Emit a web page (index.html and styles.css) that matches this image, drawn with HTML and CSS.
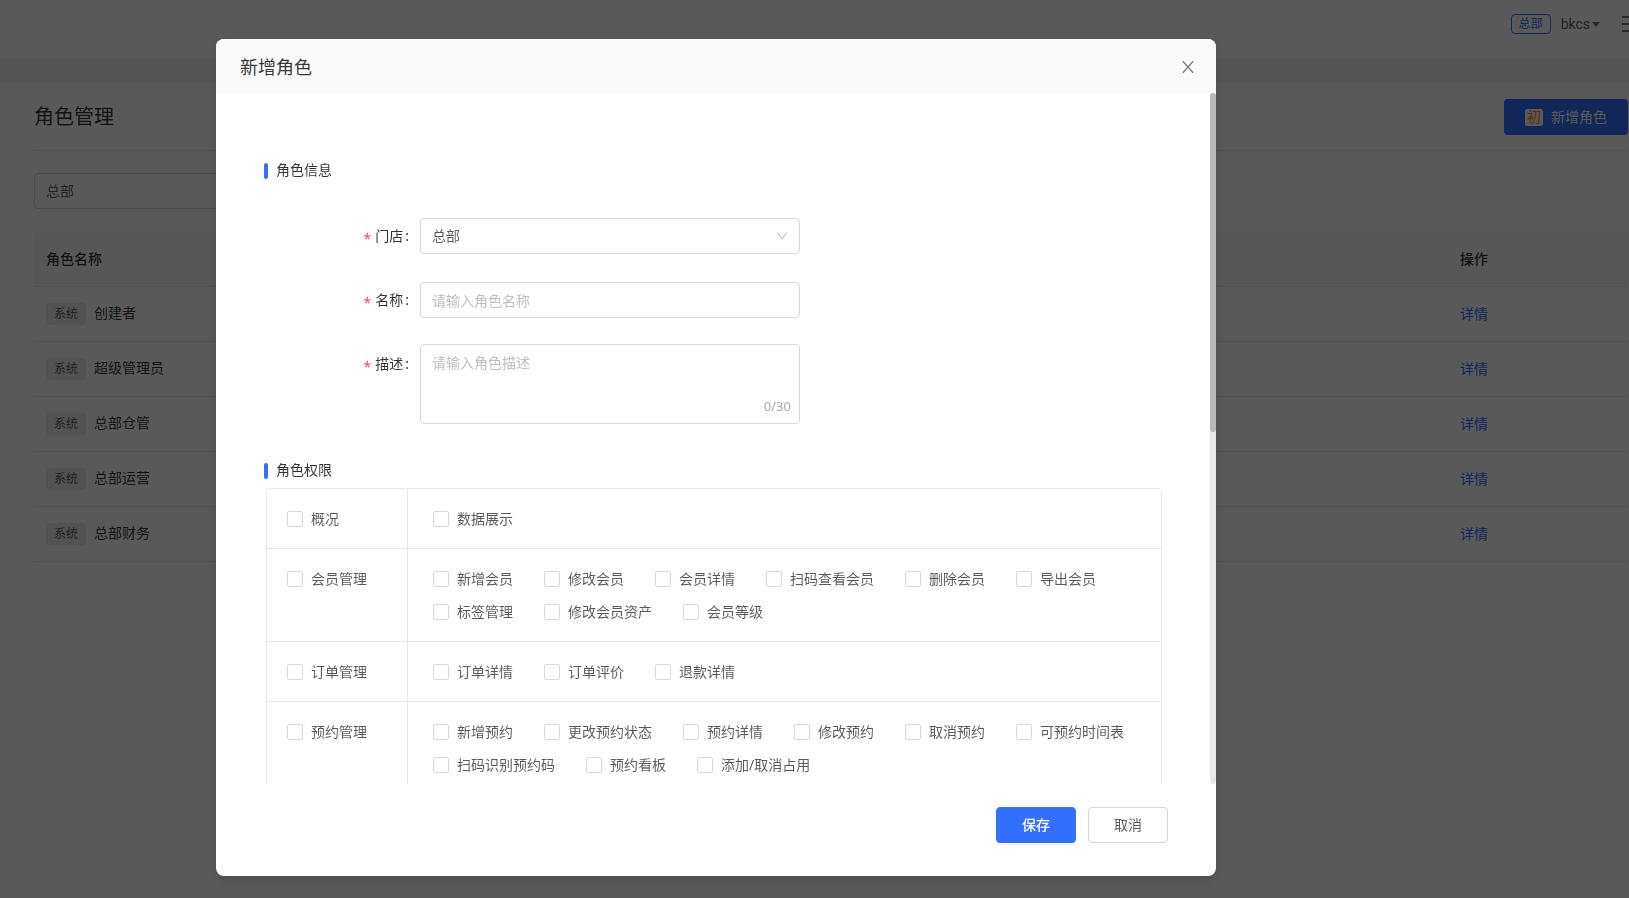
FILE: index.html
```html
<!DOCTYPE html>
<html lang="zh-CN">
<head>
<meta charset="utf-8">
<title>角色管理</title>
<link rel="stylesheet" href="styles.css">
</head>
<body>
<div class="page">
  <header class="topbar">
    <span class="tag-outline">总部</span>
    <button class="user" type="button">bkcs<span class="caret"></span></button>
    <button class="menu" type="button" aria-label="菜单"><span></span><span></span><span></span></button>
  </header>
  <main class="content">
    <div class="content-head">
      <h1 class="content-title">角色管理</h1>
      <button class="btn-add" type="button"><span class="badge">初</span>新增角色</button>
    </div>
    <select class="store-filter" aria-label="门店"><option>总部</option></select>
    <table class="roles">
      <thead><tr><th>角色名称</th><th class="col-action">操作</th></tr></thead>
      <tbody>
        <tr><td><span class="tag">系统</span>创建者</td><td><a href="#">详情</a></td></tr>
        <tr><td><span class="tag">系统</span>超级管理员</td><td><a href="#">详情</a></td></tr>
        <tr><td><span class="tag">系统</span>总部仓管</td><td><a href="#">详情</a></td></tr>
        <tr><td><span class="tag">系统</span>总部运营</td><td><a href="#">详情</a></td></tr>
        <tr><td><span class="tag">系统</span>总部财务</td><td><a href="#">详情</a></td></tr>
      </tbody>
    </table>
  </main>
</div>

<div class="mask">
  <section class="modal" role="dialog" aria-labelledby="dialog-title">
    <header class="modal-head">
      <h2 class="modal-title" id="dialog-title">新增角色</h2>
      <button class="close" type="button" aria-label="关闭">
        <svg width="14" height="14" viewBox="0 0 14 14" fill="none" stroke="currentColor" stroke-width="1.3"><path d="M1.8 1.2l10.4 11.6M12.2 1.2L1.8 12.8"/></svg>
      </button>
    </header>
    <div class="modal-body">
      <form class="form" id="role-form">
        <h3 class="section">角色信息</h3>
        <div class="fields">
          <div class="field">
            <label class="label" for="store">门店</label>
            <div class="control">
              <select class="input" id="store"><option>总部</option></select>
              <svg class="arrow" width="12" height="12" viewBox="0 0 12 12" fill="none" stroke="currentColor" stroke-width="1.1"><path d="M1.5 2.500L6 9l4.500-6.500"/></svg>
            </div>
          </div>
          <div class="field">
            <label class="label" for="name">名称</label>
            <div class="control"><input class="input" id="name" type="text" placeholder="请输入角色名称"></div>
          </div>
          <div class="field field-area">
            <label class="label" for="desc">描述</label>
            <div class="control">
              <textarea class="input area" id="desc" placeholder="请输入角色描述"></textarea>
              <span class="count">0/30</span>
            </div>
          </div>
        </div>
        <h3 class="section">角色权限</h3>
        <table class="perms">
          <tr>
            <th><label class="check"><input type="checkbox">概况</label></th>
            <td><div class="checks"><label class="check"><input type="checkbox">数据展示</label></div></td>
          </tr>
          <tr>
            <th><label class="check"><input type="checkbox">会员管理</label></th>
            <td><div class="checks">
              <label class="check"><input type="checkbox">新增会员</label>
              <label class="check"><input type="checkbox">修改会员</label>
              <label class="check"><input type="checkbox">会员详情</label>
              <label class="check"><input type="checkbox">扫码查看会员</label>
              <label class="check"><input type="checkbox">删除会员</label>
              <label class="check"><input type="checkbox">导出会员</label>
              <label class="check"><input type="checkbox">标签管理</label>
              <label class="check"><input type="checkbox">修改会员资产</label>
              <label class="check"><input type="checkbox">会员等级</label>
            </div></td>
          </tr>
          <tr>
            <th><label class="check"><input type="checkbox">订单管理</label></th>
            <td><div class="checks">
              <label class="check"><input type="checkbox">订单详情</label>
              <label class="check"><input type="checkbox">订单评价</label>
              <label class="check"><input type="checkbox">退款详情</label>
            </div></td>
          </tr>
          <tr>
            <th><label class="check"><input type="checkbox">预约管理</label></th>
            <td><div class="checks">
              <label class="check"><input type="checkbox">新增预约</label>
              <label class="check"><input type="checkbox">更改预约状态</label>
              <label class="check"><input type="checkbox">预约详情</label>
              <label class="check"><input type="checkbox">修改预约</label>
              <label class="check"><input type="checkbox">取消预约</label>
              <label class="check"><input type="checkbox">可预约时间表</label>
              <label class="check"><input type="checkbox">扫码识别预约码</label>
              <label class="check"><input type="checkbox">预约看板</label>
              <label class="check"><input type="checkbox">添加/取消占用</label>
            </div></td>
          </tr>
        </table>
      </form>
      <div class="track"><div class="thumb"></div></div>
    </div>
    <footer class="modal-foot">
      <button class="btn btn-primary" type="submit" form="role-form">保存</button>
      <button class="btn" type="button">取消</button>
    </footer>
  </section>
</div>
</body>
</html>
```
FILE: styles.css
```css
* { box-sizing: border-box; }
body, h1, h2, h3 { margin: 0; font-weight: 400; }
body {
  height: 100vh;
  overflow: hidden;
  background: #f0f2f5;
  color: rgba(0, 0, 0, 0.8);
  font-family: "Noto Sans", "Noto Sans CJK SC", sans-serif;
  font-size: 14px;
  line-height: 22px;
}
button, input, select, textarea { font: inherit; color: inherit; margin: 0; }
button { cursor: pointer; }

/* Page behind the dialog */
.page { display: flex; flex-direction: column; gap: 24px; height: 100vh; background: #f2f2f2; }
.topbar { display: flex; justify-content: flex-end; align-items: flex-start; height: 59px; padding-top: 14px; background: #fff; }
.tag-outline { height: 20px; padding: 0 7px; border: 1px solid #3370ff; border-radius: 4px; color: #3370ff; font-size: 12px; line-height: 18px; }
.user { display: flex; align-items: center; gap: 2px; height: 20px; margin-left: 10px; padding: 0; border: 0; background: none; font-family: Roboto, sans-serif; color: rgba(0, 0, 0, 0.65); }
.caret { border: 4px solid transparent; border-top: 5px solid #777; border-bottom: 0; }
.menu { display: flex; flex-direction: column; gap: 5px; width: 7px; margin-left: 22px; padding: 2px 0; border: 0; background: none; }
.menu span { height: 2px; background: #777; }
.content { flex: 1; padding: 0 1px 0 34px; background: #fff; }
.content-head { display: flex; justify-content: space-between; align-items: center; height: 68px; padding-top: 1px; border-bottom: 1px solid #e8e8e8; }
.content-title { font-size: 20px; line-height: 30px; }
.btn-add { display: flex; align-items: center; gap: 8px; height: 36px; padding: 0 21px; border: 0; border-radius: 4px; background: #3370ff; color: #fff; }
.badge { width: 18px; height: 17px; border-radius: 2px; background: #fff; color: #fa8c16; line-height: 16px; text-align: center; }
.store-filter { display: block; appearance: none; width: 240px; height: 36px; margin-top: 22px; padding: 0 11px; border: 1px solid #d9d9d9; border-radius: 4px; background: #fff; color: rgba(0, 0, 0, 0.65); }
.roles { width: 100%; margin-top: 24px; border-collapse: separate; border-spacing: 0; table-layout: fixed; }
.roles th, .roles td { padding: 0 12px 2px; border-bottom: 1px solid #e8e8e8; text-align: left; }
.roles th { height: 54px; background: #fafafa; font-weight: 500; }
.roles td { height: 55px; }
.roles td + td { padding-bottom: 0; }
.roles .col-action { width: 180px; }
.tag { display: inline-block; margin-right: 8px; padding: 0 8px; border-radius: 4px; background: #ebebeb; color: rgba(0, 0, 0, 0.65); font-size: 12px; line-height: 22px; }
.roles a { color: #3370ff; text-decoration: none; }

/* Dialog */
.mask { position: fixed; inset: 0; display: flex; padding: 39px 0 22px 216px; background: rgba(0, 0, 0, 0.65); }
.modal { display: flex; flex-direction: column; width: 1000px; max-width: 100%; border-radius: 8px; background: #fff; box-shadow: 0 4px 12px rgba(0, 0, 0, 0.15); overflow: hidden; }
.modal-head { display: flex; justify-content: space-between; align-items: center; height: 54px; padding: 1px 20px 0 24px; background: #fafafa; }
.modal-title { font-size: 18px; line-height: 26px; }
.close { display: flex; padding: 2px 1px 1px; border: 0; background: none; color: rgba(0, 0, 0, 0.5); }
.modal-body { flex: 1; display: flex; min-height: 0; }
.form { flex: 1; padding: 66px 48px 0; overflow: hidden; }
.track { width: 6px; border-radius: 3px; background: #e8e8e8; }
.thumb { height: 49%; border-radius: 3px; background: #b9bbbb; }
.section { display: flex; align-items: flex-start; gap: 8px; height: 24px; font-size: 14px; line-height: 22px; }
.section::before { content: ""; width: 4px; height: 16px; margin-top: 4px; border-radius: 2px; background: #3370ff; }
.fields { display: flex; flex-direction: column; gap: 28px; padding: 35px 0; }
.field { display: grid; grid-template-columns: 156px 380px; }
.field-area { margin-top: -2px; }
.field-area .label { padding-top: 2px; }
.label { padding-right: 11px; line-height: 36px; text-align: right; }
.label::before { content: "*"; margin-right: 4px; color: #ff4d4f; line-height: 1; vertical-align: -3px; }
.label::after { content: ":"; margin-left: 2px; }
.control { position: relative; display: flex; }
.input { appearance: none; width: 100%; height: 36px; padding: 0 11px; border: 1px solid #d9d9d9; border-radius: 4px; background: #fff; color: rgba(0, 0, 0, 0.65); outline: 0; }
.input::placeholder { color: #bfbfbf; }
.area { height: 80px; padding: 7px 11px; resize: none; }
.arrow { position: absolute; top: 12px; right: 12px; color: #bfbfbf; }
.count { position: absolute; right: 9px; bottom: 7px; color: #aaa; font-size: 13px; }
.perms { width: 896px; max-width: 100%; margin: 5px 0 0 2px; border: 1px solid #e8e8e8; border-radius: 4px; border-spacing: 0; table-layout: fixed; }
.perms th, .perms td { padding: 13px 0; vertical-align: top; text-align: left; font-weight: 400; border-bottom: 1px solid #e8e8e8; }
.perms th { width: 141px; padding-left: 20px; border-right: 1px solid #e8e8e8; }
.perms td { padding-left: 25px; }
.checks { display: flex; flex-wrap: wrap; column-gap: 31px; }
.check { display: flex; align-items: center; gap: 8px; height: 33px; color: rgba(0, 0, 0, 0.65); }
.check input { appearance: none; width: 16px; height: 16px; border: 1px solid #d9d9d9; border-radius: 2px; background: #fff; }
.modal-foot { display: flex; justify-content: flex-end; gap: 12px; height: 92px; padding: 23px 48px 0; }
.btn { width: 80px; height: 36px; padding: 0; border: 1px solid #d9d9d9; border-radius: 4px; background: #fff; color: rgba(0, 0, 0, 0.65); }
.btn-primary { border-color: #3370ff; background: #3370ff; color: #fff; font-weight: 500; box-shadow: 0 2px 0 rgba(0, 0, 0, 0.04); }
```
